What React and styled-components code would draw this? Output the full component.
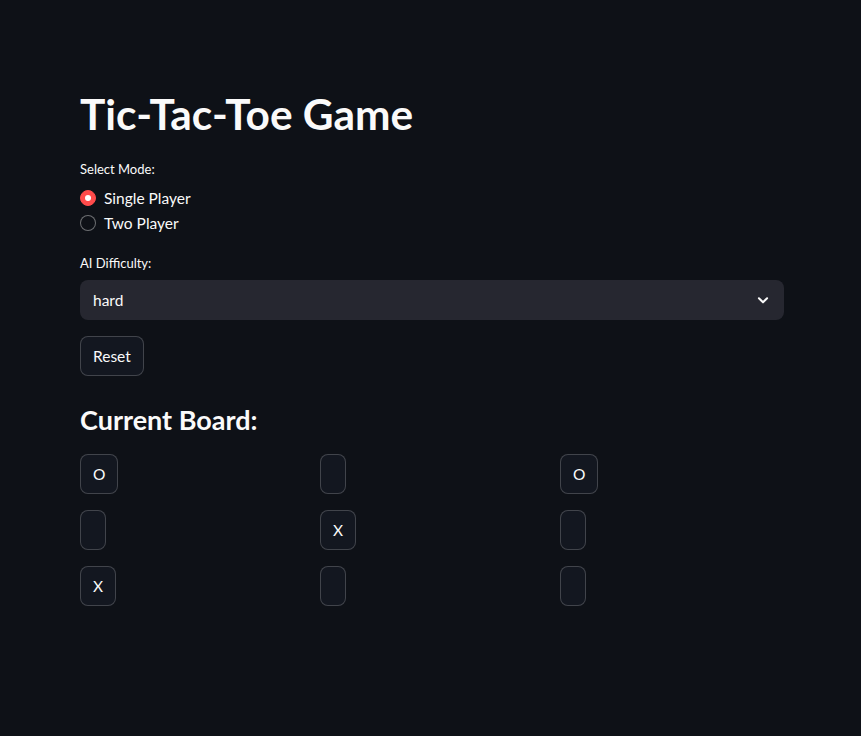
import React from "react";
import { styled, createGlobalStyle } from "styled-components";

const Global = createGlobalStyle`
  html, body {
    margin: 0;
    padding: 0;
    background: #0e1117;
  }
  body {
    font-family: Lato, "Open Sans", sans-serif;
    color: #fafafa;
  }
`;

const Main = styled.div`
  width: 704px;
  padding: 84px 0 0 80px;
  display: flex;
  flex-direction: column;
`;

const Title = styled.h1`
  margin: 0;
  font-size: 42.4px;
  font-weight: 700;
  line-height: 60px;
  color: #fafafa;
`;

const Label = styled.div`
  font-size: 13px;
  line-height: 20px;
  color: #fafafa;
  margin-top: ${(p) => p.$top || 0}px;
`;

const RadioGroup = styled.div`
  display: flex;
  flex-direction: column;
  gap: 5px;
  margin-top: 9px;
`;

const RadioRow = styled.label`
  display: flex;
  align-items: center;
  gap: 8px;
  font-size: 15.5px;
  line-height: 20px;
`;

const Dot = styled.span`
  width: 16px;
  height: 16px;
  border-radius: 50%;
  box-sizing: border-box;
  display: flex;
  align-items: center;
  justify-content: center;
  background: ${(p) => (p.$on ? "#ff4b4b" : "#0e1117")};
  border: 1px solid ${(p) => (p.$on ? "#ff4b4b" : "rgba(250,250,250,0.4)")};
  &::after {
    content: "";
    width: 6px;
    height: 6px;
    border-radius: 50%;
    background: #fff;
    display: ${(p) => (p.$on ? "block" : "none")};
  }
`;

const Select = styled.div`
  margin-top: 7px;
  height: 40px;
  border-radius: 8px;
  background: #262730;
  display: flex;
  align-items: center;
  justify-content: space-between;
  padding: 0 14px 0 13px;
  font-size: 15.5px;
`;

const Button = styled.button`
  box-sizing: border-box;
  height: 40px;
  padding: 0 12px;
  min-width: 26px;
  border-radius: 8px;
  border: 1px solid rgba(250, 250, 250, 0.2);
  background: #131720;
  color: #fafafa;
  font-family: inherit;
  font-size: 15.5px;
  cursor: pointer;
`;

const ResetRow = styled.div`
  margin-top: 16px;
  display: flex;
`;

const Subtitle = styled.h3`
  margin: 26px 0 0;
  font-size: 27px;
  font-weight: 700;
  line-height: 36px;
`;

const Board = styled.div`
  margin-top: 16px;
  display: grid;
  grid-template-columns: repeat(3, 1fr);
  column-gap: 16px;
  row-gap: 16px;
`;

const Cell = styled.div`
  display: flex;
`;

const board = ["O", "", "O", "", "X", "", "X", "", ""];

export default function App() {
  return (
    <>
      <Global />
      <Main>
        <Title>Tic-Tac-Toe Game</Title>
        <Label $top={15}>Select Mode:</Label>
        <RadioGroup>
          <RadioRow>
            <Dot $on />
            Single Player
          </RadioRow>
          <RadioRow>
            <Dot />
            Two Player
          </RadioRow>
        </RadioGroup>
        <Label $top={20}>AI Difficulty:</Label>
        <Select>
          <span>hard</span>
          <svg width="14" height="14" viewBox="0 0 24 24" fill="none" stroke="#fafafa" strokeWidth="3.5" strokeLinecap="round" strokeLinejoin="round">
            <path d="M5 9l7 7 7-7" />
          </svg>
        </Select>
        <ResetRow>
          <Button>Reset</Button>
        </ResetRow>
        <Subtitle>Current Board:</Subtitle>
        <Board>
          {board.map((v, i) => (
            <Cell key={i}>
              <Button>{v}</Button>
            </Cell>
          ))}
        </Board>
      </Main>
    </>
  );
}
